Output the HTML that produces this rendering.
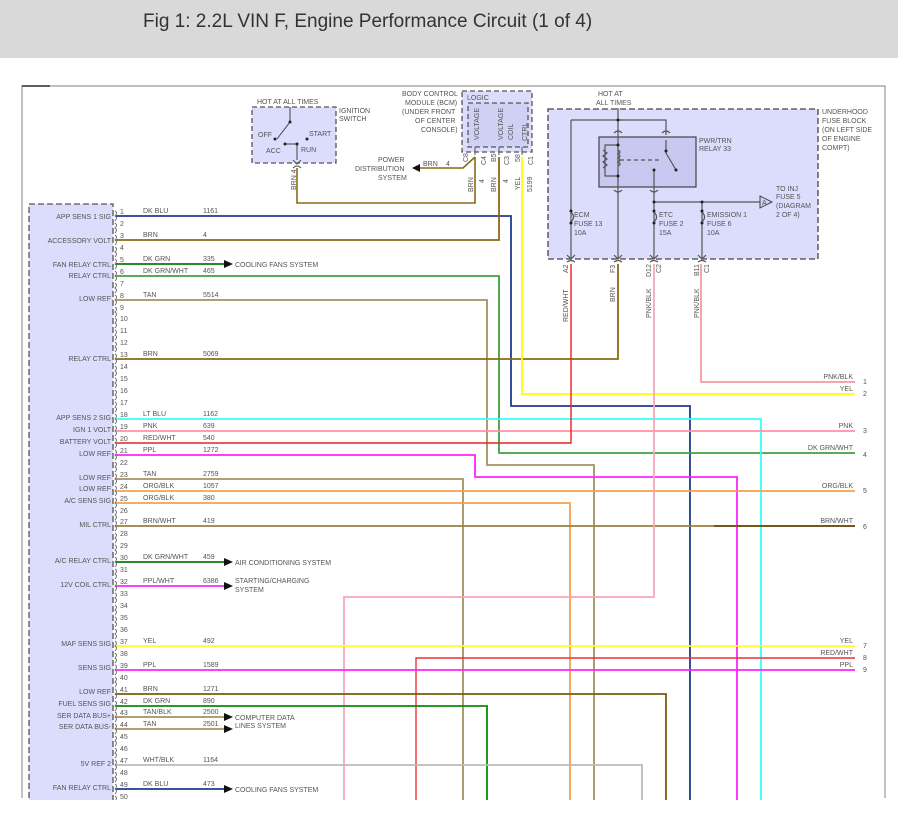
<!DOCTYPE html>
<html><head><meta charset="utf-8"><style>
html,body{margin:0;padding:0;background:#fff;width:898px;height:825px;overflow:hidden}
.hdr{position:absolute;left:0;top:0;width:898px;height:58px;background:#d9d9d9;}
.hdr span{position:absolute;left:143px;top:11px;font:19px "Liberation Sans",sans-serif;color:#333}
svg{position:absolute;left:0;top:0}
text{font-family:"Liberation Sans",sans-serif;font-size:7px;fill:#555}
</style></head><body>
<div class="hdr"><span>Fig 1: 2.2L VIN F, Engine Performance Circuit (1 of 4)</span></div>
<svg width="898" height="825" viewBox="0 0 898 825">
<!-- outer border -->
<path d="M22 798V86H885V798" fill="none" stroke="#999" stroke-width="1.2"/>
<path d="M22 86H50" stroke="#333" stroke-width="1.5"/>
<!-- left connector box -->
<rect x="29" y="204" width="84" height="600" fill="#dcdcfc" stroke="#555" stroke-dasharray="6,3" stroke-width="1.3"/>

<!-- ignition switch -->
<rect x="252" y="107" width="84" height="56" fill="#dcdcfc" stroke="#555" stroke-dasharray="5,3" stroke-width="1.3"/>
<text x="257" y="104">HOT AT ALL TIMES</text>
<text x="339" y="113">IGNITION</text><text x="339" y="121">SWITCH</text>
<path d="M290 107V122L277 139M285 144H297M297 144V160" stroke="#444" fill="none" stroke-width="1"/>
<circle cx="290" cy="122" r="1.5" fill="#222"/><circle cx="275" cy="139" r="1.5" fill="#222"/><circle cx="307" cy="139" r="1.5" fill="#222"/><circle cx="285" cy="144" r="1.5" fill="#222"/><circle cx="297" cy="144" r="1.5" fill="#222"/>
<text x="258" y="137">OFF</text><text x="309" y="136">START</text><text x="266" y="153">ACC</text><text x="301" y="152">RUN</text>
<path d="M293 160l4 4 4-4M293 168q4-4 8 0" stroke="#555" fill="none"/>
<text transform="translate(296,190) rotate(-90)">BRN 4</text>

<!-- BCM -->
<text x="402" y="96">BODY CONTROL</text><text x="405" y="105">MODULE (BCM)</text><text x="402" y="114">(UNDER FRONT</text><text x="415" y="123">OF CENTER</text><text x="421" y="132">CONSOLE)</text>
<rect x="462" y="91" width="70" height="61" fill="#dcdcfc" stroke="#555" stroke-dasharray="5,3" stroke-width="1.3"/>
<rect x="468" y="103" width="60" height="44" fill="#d0d0f4" stroke="#555" stroke-dasharray="5,3" stroke-width="1.3"/>
<text x="467" y="100">LOGIC</text>
<text transform="translate(479,140) rotate(-90)">VOLTAGE</text>
<text transform="translate(503,140) rotate(-90)">VOLTAGE</text>
<text transform="translate(513,140) rotate(-90)">COIL</text>
<text transform="translate(527,141) rotate(-90)">CTRL</text>
<path d="M475 147v8M499 147v8M522 147v8" stroke="#555"/>
<text transform="translate(468,162) rotate(-90)">C8</text><text transform="translate(486,165) rotate(-90)">C4</text>
<text transform="translate(496,162) rotate(-90)">B5</text><text transform="translate(509,165) rotate(-90)">C3</text>
<text transform="translate(520,162) rotate(-90)">58</text><text transform="translate(533,165) rotate(-90)">C1</text>
<text transform="translate(473,192) rotate(-90)">BRN</text><text transform="translate(484,183) rotate(-90)">4</text>
<text transform="translate(496,192) rotate(-90)">BRN</text><text transform="translate(508,183) rotate(-90)">4</text>
<text transform="translate(520,190) rotate(-90)">YEL</text><text transform="translate(532,192) rotate(-90)">5199</text>
<text x="378" y="162">POWER</text><text x="355" y="171">DISTRIBUTION</text><text x="378" y="180">SYSTEM</text>
<text x="423" y="166">BRN</text><text x="446" y="166">4</text>
<path d="M412 168l8-4v8z" fill="#111"/>
<path d="M420 168H463L475 157" stroke="#8a6a18" stroke-width="1.6" fill="none"/>
<path d="M297 168V203H475V157" stroke="#8a6a18" stroke-width="1.6" fill="none"/>

<!-- underhood fuse block -->
<rect x="548" y="109" width="270" height="150" fill="#dcdcfc" stroke="#444" stroke-dasharray="6,3" stroke-width="1.3"/>
<text x="598" y="96">HOT AT</text><text x="596" y="105">ALL TIMES</text>
<text x="822" y="114">UNDERHOOD</text><text x="822" y="123">FUSE BLOCK</text><text x="822" y="132">(ON LEFT SIDE</text><text x="822" y="141">OF ENGINE</text><text x="822" y="150">COMPT)</text>
<rect x="599" y="137" width="97" height="50" fill="#c8c8f0" stroke="#444" stroke-width="1.2"/>
<text x="699" y="143">PWR/TRN</text><text x="699" y="151">RELAY 33</text>
<g stroke="#555" fill="none" stroke-width="1.2">
<path d="M618 108V259M571 120H666V135M571 120V259M666 140V153L676 170M654 170V259M654 202H760M702 202V259"/>
<path d="M618 145H605V176H618M603 150l4 3-4 3 4 3-4 3 4 3-4 3"/>
<path d="M618 150q4 2 0 4q4 2 0 4q4 2 0 4q4 2 0 4"/>
<path d="M620 160H662" stroke-dasharray="4,3"/>
<path d="M614 133q4-4 8 0M662 133q4-4 8 0M614 190q4 4 8 0M650 190q4 4 8 0"/>
<path d="M571 212q5 5 0 10M654 212q5 5 0 10M702 212q5 5 0 10"/>
<path d="M567 255l4 4 4-4M614 255l4 4 4-4M650 255l4 4 4-4M698 255l4 4 4-4"/>
<path d="M567 262q4-3 8 0M614 262q4-3 8 0M650 262q4-3 8 0M698 262q4-3 8 0"/>
</g>
<path d="M760 196l12 6-12 6z" fill="#d0d0f4" stroke="#444"/>
<text x="762" y="205">A</text>
<g fill="#222"><circle cx="618" cy="120" r="1.5"/><circle cx="618" cy="145" r="1.5"/><circle cx="618" cy="176" r="1.5"/><circle cx="666" cy="151" r="1.5"/><circle cx="676" cy="170" r="1.5"/><circle cx="654" cy="170" r="1.5"/><circle cx="654" cy="202" r="1.5"/><circle cx="702" cy="202" r="1.5"/><circle cx="571" cy="211" r="1.5"/><circle cx="571" cy="223" r="1.5"/><circle cx="654" cy="211" r="1.5"/><circle cx="654" cy="223" r="1.5"/><circle cx="702" cy="211" r="1.5"/><circle cx="702" cy="223" r="1.5"/></g>
<text x="574" y="217">ECM</text><text x="574" y="226">FUSE 13</text><text x="574" y="235">10A</text>
<text x="659" y="217">ETC</text><text x="659" y="226">FUSE 2</text><text x="659" y="235">15A</text>
<text x="707" y="217">EMISSION 1</text><text x="707" y="226">FUSE 6</text><text x="707" y="235">10A</text>
<text x="776" y="191">TO INJ</text><text x="776" y="199">FUSE 5</text><text x="776" y="208">(DIAGRAM</text><text x="776" y="217">2 OF 4)</text>
<text transform="translate(568,273) rotate(-90)">A2</text>
<text transform="translate(615,273) rotate(-90)">F3</text>
<text transform="translate(651,277) rotate(-90)">D12</text><text transform="translate(661,273) rotate(-90)">C2</text>
<text transform="translate(699,276) rotate(-90)">B11</text><text transform="translate(709,273) rotate(-90)">C1</text>
<text transform="translate(568,322) rotate(-90)">RED/WHT</text>
<text transform="translate(615,302) rotate(-90)">BRN</text>
<text transform="translate(651,318) rotate(-90)">PNK/BLK</text>
<text transform="translate(699,318) rotate(-90)">PNK/BLK</text>

<!-- wires -->
<g fill="none" stroke-width="1.8">
<path d="M116 216H511V406H690V800" stroke="#1e3c8c"/>
<path d="M116 240H499V157" stroke="#8a6a18"/>
<path d="M116 264H225" stroke="#0a7a0a"/>
<path d="M116 276H499V453H855" stroke="#40a040"/>
<path d="M116 300H487V465H594V800" stroke="#a89060"/>
<path d="M116 359H618V264" stroke="#8a6a18"/>
<path d="M522 157V394H855" stroke="#ffff00"/>
<path d="M701 264V382H855" stroke="#f598a8"/>
<path d="M116 419H761V800" stroke="#33ffff"/>
<path d="M116 431H855" stroke="#ff90a8"/>
<path d="M116 443H571V264" stroke="#ee2020" stroke-width="1.4"/>
<path d="M116 455H475V477H737V800" stroke="#ff22ff"/>
<path d="M116 479H463V800" stroke="#a89060"/>
<path d="M116 491H855" stroke="#f5a050"/>
<path d="M116 503H570V800" stroke="#f5a050"/>
<path d="M116 526H855" stroke="#9a8040"/>
<path d="M714 526H855" stroke="#6a5010"/>
<path d="M116 562H225" stroke="#0a7a0a"/>
<path d="M116 586H225" stroke="#ff22ff"/>
<path d="M654 264V597H344V800" stroke="#f5a8b8"/>
<path d="M116 646H855" stroke="#ffff22"/>
<path d="M855 658H416V800" stroke="#ee3030" stroke-width="1.4"/>
<path d="M116 670H855" stroke="#ff22ff"/>
<path d="M116 694H666V800" stroke="#7a5a10"/>
<path d="M116 706H487V800" stroke="#0a8a0a"/>
<path d="M116 717H225" stroke="#a89060"/>
<path d="M116 729H225" stroke="#a89060"/>
<path d="M116 765H642V800" stroke="#bbbbbb"/>
<path d="M116 789H225" stroke="#1e3c8c"/>
</g>
<path d="M224 260l9 4-9 4zM224 558l9 4-9 4zM224 582l9 4-9 4zM224 713l9 4-9 4zM224 725l9 4-9 4zM224 785l9 4-9 4z" fill="#111"/>
<text x="235" y="267">COOLING FANS SYSTEM</text>
<text x="235" y="565">AIR CONDITIONING SYSTEM</text>
<text x="235" y="583">STARTING/CHARGING</text><text x="235" y="592">SYSTEM</text>
<text x="235" y="720">COMPUTER DATA</text><text x="235" y="728">LINES SYSTEM</text>
<text x="235" y="792">COOLING FANS SYSTEM</text>

<!-- right labels -->
<g text-anchor="end">
<text x="853" y="379">PNK/BLK</text><text x="853" y="391">YEL</text><text x="853" y="428">PNK</text><text x="853" y="450">DK GRN/WHT</text>
<text x="853" y="488">ORG/BLK</text><text x="853" y="523">BRN/WHT</text><text x="853" y="643">YEL</text><text x="853" y="655">RED/WHT</text><text x="853" y="667">PPL</text>
</g>
<text x="863" y="384">1</text><text x="863" y="396">2</text><text x="863" y="433">3</text><text x="863" y="457">4</text><text x="863" y="493">5</text><text x="863" y="529">6</text><text x="863" y="648">7</text><text x="863" y="660">8</text><text x="863" y="672">9</text>

<!-- pin connector arcs -->
<g id="arcs" fill="none" stroke="#666" stroke-width="0.9">
<path d="M115 211q3 2 0 5q3 2 0 5M115 223q3 2 0 5q3 2 0 5M115 235q3 2 0 5q3 2 0 5M115 247q3 2 0 5q3 2 0 5M115 259q3 2 0 5q3 2 0 5M115 271q3 2 0 5q3 2 0 5M115 283q3 2 0 5q3 2 0 5M115 295q3 2 0 5q3 2 0 5M115 307q3 2 0 5q3 2 0 5M115 318q3 2 0 5q3 2 0 5M115 330q3 2 0 5q3 2 0 5M115 342q3 2 0 5q3 2 0 5M115 354q3 2 0 5q3 2 0 5M115 366q3 2 0 5q3 2 0 5M115 378q3 2 0 5q3 2 0 5M115 390q3 2 0 5q3 2 0 5M115 402q3 2 0 5q3 2 0 5M115 414q3 2 0 5q3 2 0 5M115 426q3 2 0 5q3 2 0 5M115 438q3 2 0 5q3 2 0 5M115 450q3 2 0 5q3 2 0 5M115 462q3 2 0 5q3 2 0 5M115 474q3 2 0 5q3 2 0 5M115 486q3 2 0 5q3 2 0 5M115 498q3 2 0 5q3 2 0 5M115 510q3 2 0 5q3 2 0 5M115 521q3 2 0 5q3 2 0 5M115 533q3 2 0 5q3 2 0 5M115 545q3 2 0 5q3 2 0 5M115 557q3 2 0 5q3 2 0 5M115 569q3 2 0 5q3 2 0 5M115 581q3 2 0 5q3 2 0 5M115 593q3 2 0 5q3 2 0 5M115 605q3 2 0 5q3 2 0 5M115 617q3 2 0 5q3 2 0 5M115 629q3 2 0 5q3 2 0 5M115 641q3 2 0 5q3 2 0 5M115 653q3 2 0 5q3 2 0 5M115 665q3 2 0 5q3 2 0 5M115 677q3 2 0 5q3 2 0 5M115 689q3 2 0 5q3 2 0 5M115 701q3 2 0 5q3 2 0 5M115 712q3 2 0 5q3 2 0 5M115 724q3 2 0 5q3 2 0 5M115 736q3 2 0 5q3 2 0 5M115 748q3 2 0 5q3 2 0 5M115 760q3 2 0 5q3 2 0 5M115 772q3 2 0 5q3 2 0 5M115 784q3 2 0 5q3 2 0 5M115 796q3 2 0 5"/>
</g>
<!-- pin numbers -->
<g>
<text x="120" y="214">1</text><text x="120" y="226">2</text><text x="120" y="238">3</text><text x="120" y="250">4</text><text x="120" y="262">5</text><text x="120" y="274">6</text><text x="120" y="286">7</text><text x="120" y="298">8</text><text x="120" y="310">9</text><text x="120" y="321">10</text>
<text x="120" y="333">11</text><text x="120" y="345">12</text><text x="120" y="357">13</text><text x="120" y="369">14</text><text x="120" y="381">15</text><text x="120" y="393">16</text><text x="120" y="405">17</text><text x="120" y="417">18</text><text x="120" y="429">19</text><text x="120" y="441">20</text>
<text x="120" y="453">21</text><text x="120" y="465">22</text><text x="120" y="477">23</text><text x="120" y="489">24</text><text x="120" y="501">25</text><text x="120" y="513">26</text><text x="120" y="524">27</text><text x="120" y="536">28</text><text x="120" y="548">29</text><text x="120" y="560">30</text>
<text x="120" y="572">31</text><text x="120" y="584">32</text><text x="120" y="596">33</text><text x="120" y="608">34</text><text x="120" y="620">35</text><text x="120" y="632">36</text><text x="120" y="644">37</text><text x="120" y="656">38</text><text x="120" y="668">39</text><text x="120" y="680">40</text>
<text x="120" y="692">41</text><text x="120" y="704">42</text><text x="120" y="715">43</text><text x="120" y="727">44</text><text x="120" y="739">45</text><text x="120" y="751">46</text><text x="120" y="763">47</text><text x="120" y="775">48</text><text x="120" y="787">49</text><text x="120" y="799">50</text>
</g>
<!-- wire colors / numbers -->
<g>
<text x="143" y="213">DK BLU</text><text x="203" y="213">1161</text>
<text x="143" y="237">BRN</text><text x="203" y="237">4</text>
<text x="143" y="261">DK GRN</text><text x="203" y="261">335</text>
<text x="143" y="273">DK GRN/WHT</text><text x="203" y="273">465</text>
<text x="143" y="297">TAN</text><text x="203" y="297">5514</text>
<text x="143" y="356">BRN</text><text x="203" y="356">5069</text>
<text x="143" y="416">LT BLU</text><text x="203" y="416">1162</text>
<text x="143" y="428">PNK</text><text x="203" y="428">639</text>
<text x="143" y="440">RED/WHT</text><text x="203" y="440">540</text>
<text x="143" y="452">PPL</text><text x="203" y="452">1272</text>
<text x="143" y="476">TAN</text><text x="203" y="476">2759</text>
<text x="143" y="488">ORG/BLK</text><text x="203" y="488">1057</text>
<text x="143" y="500">ORG/BLK</text><text x="203" y="500">380</text>
<text x="143" y="523">BRN/WHT</text><text x="203" y="523">419</text>
<text x="143" y="559">DK GRN/WHT</text><text x="203" y="559">459</text>
<text x="143" y="583">PPL/WHT</text><text x="203" y="583">6386</text>
<text x="143" y="643">YEL</text><text x="203" y="643">492</text>
<text x="143" y="667">PPL</text><text x="203" y="667">1589</text>
<text x="143" y="691">BRN</text><text x="203" y="691">1271</text>
<text x="143" y="703">DK GRN</text><text x="203" y="703">890</text>
<text x="143" y="714">TAN/BLK</text><text x="203" y="714">2500</text>
<text x="143" y="726">TAN</text><text x="203" y="726">2501</text>
<text x="143" y="762">WHT/BLK</text><text x="203" y="762">1164</text>
<text x="143" y="786">DK BLU</text><text x="203" y="786">473</text>
</g>
<!-- connector labels -->
<g text-anchor="end">
<text x="111" y="219">APP SENS 1 SIG</text><text x="111" y="243">ACCESSORY VOLT</text><text x="111" y="267">FAN RELAY CTRL</text><text x="111" y="278">RELAY CTRL</text>
<text x="111" y="301">LOW REF</text><text x="111" y="361">RELAY CTRL</text><text x="111" y="420">APP SENS 2 SIG</text><text x="111" y="432">IGN 1 VOLT</text>
<text x="111" y="444">BATTERY VOLT</text><text x="111" y="456">LOW REF</text><text x="111" y="480">LOW REF</text><text x="111" y="491">LOW REF</text>
<text x="111" y="503">A/C SENS SIG</text><text x="111" y="527">MIL CTRL</text><text x="111" y="563">A/C RELAY CTRL</text><text x="111" y="587">12V COIL CTRL</text>
<text x="111" y="646">MAF SENS SIG</text><text x="111" y="670">SENS SIG</text><text x="111" y="694">LOW REF</text><text x="111" y="706">FUEL SENS SIG</text>
<text x="111" y="718">SER DATA BUS+</text><text x="111" y="729">SER DATA BUS-</text><text x="111" y="766">5V REF 2</text><text x="111" y="790">FAN RELAY CTRL</text>
</g>
<rect x="0" y="800" width="898" height="25" fill="#fff"/>
</svg>
</body></html>
